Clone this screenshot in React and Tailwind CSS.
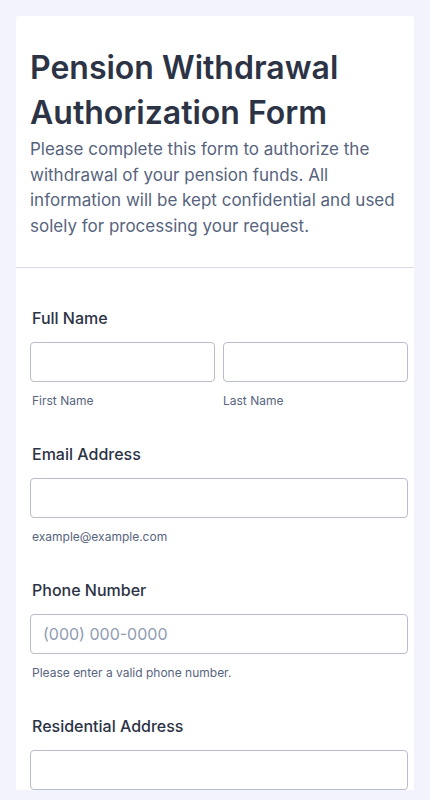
import React from "react";

const Field = ({ label, children, sub, className = "" }) => (
  <div className={className}>
    <label className="block px-[2px] text-base font-medium leading-5 text-[#2c3345]">{label}</label>
    <div className="mt-[14px]">{children}</div>
    {sub && <div className="mt-[11px] px-[2px] text-xs leading-4 text-[#57647e]">{sub}</div>}
  </div>
);

const Input = ({ placeholder }) => (
  <input
    type="text"
    placeholder={placeholder}
    className="block h-10 w-full rounded-[4px] border border-[#b8bdc9] bg-white px-3 text-base text-[#2c3345] placeholder:text-[#8f9bb3] focus:outline-none"
  />
);

export default function App() {
  return (
    <div className="min-h-screen bg-[#f3f3fe] px-4 pt-4" style={{ fontFamily: "Inter, 'Noto Sans', sans-serif" }}>
      <div className="w-[398px] rounded-t-[3px] bg-white">
        <div className="pl-[14px] pr-[14px] pt-[29px] pb-[28px]">
          <h1 className="text-[32px] font-semibold leading-[45px] text-[#2c3345]">
            Pension Withdrawal Authorization Form
          </h1>
          <p className="mt-[2px] text-[17px] leading-[25.5px] text-[#57647e]">
            Please complete this form to authorize the withdrawal of your pension funds. All information will be kept confidential and used solely for processing your request.
          </p>
        </div>
        <div className="h-px bg-[#d8dae5]" />
        <div className="pl-[14px] pr-[6px] pt-[40px]">
          <Field
            label="Full Name"
            sub={
              <div className="grid grid-cols-2 gap-2">
                <span>First Name</span>
                <span>Last Name</span>
              </div>
            }
          >
            <div className="grid grid-cols-2 gap-2">
              <Input />
              <Input />
            </div>
          </Field>
          <Field label="Email Address" sub="example@example.com" className="mt-[35px]">
            <Input />
          </Field>
          <Field label="Phone Number" sub="Please enter a valid phone number." className="mt-[35px]">
            <Input placeholder="(000) 000-0000" />
          </Field>
          <Field label="Residential Address" className="mt-[35px]">
            <Input />
          </Field>
        </div>
      </div>
    </div>
  );
}
